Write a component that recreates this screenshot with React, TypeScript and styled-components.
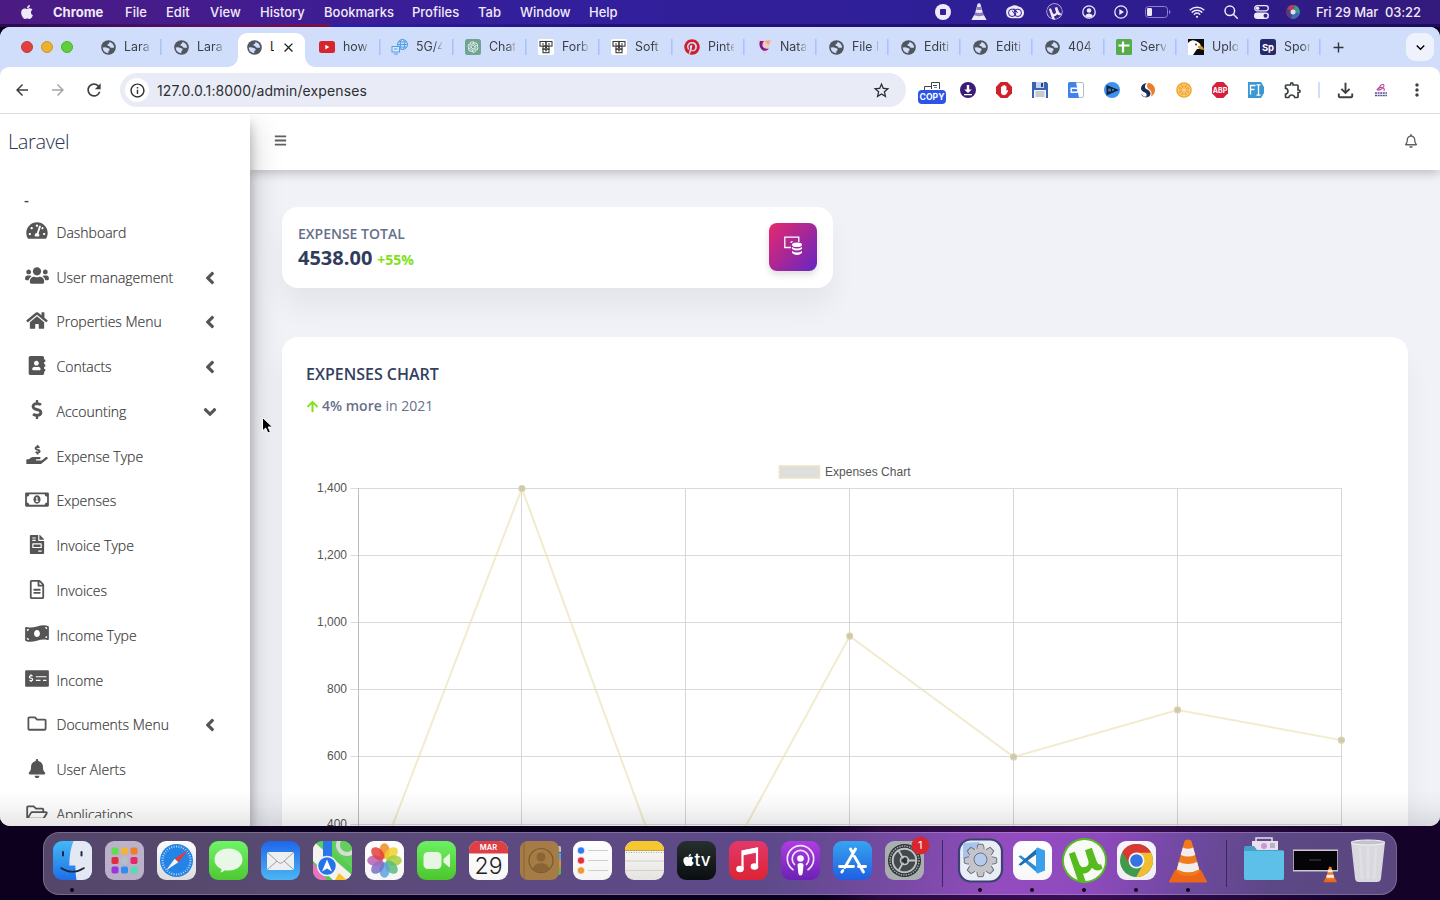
import React from "react";
import styled, { createGlobalStyle, css } from "styled-components";
import {
  FaAddressBook, FaAngleDown, FaAngleLeft, FaApple, FaArrowUp, FaBars, FaBell, FaDollarSign,
  FaFileInvoice, FaHandHoldingUsd, FaHome, FaMoneyBillWave, FaMoneyCheckAlt, FaPinterest,
  FaRegBell, FaRegFileAlt, FaRegFolder, FaRegFolderOpen, FaRegMoneyBillAlt, FaTachometerAlt, FaUsers,
} from "react-icons/fa";
import {
  MdAdd, MdArrowBack, MdArrowForward, MdClose, MdExpandMore, MdInfoOutline, MdMoreVert,
  MdOutlineExtension, MdOutlineFileDownload, MdRefresh, MdStarOutline,
} from "react-icons/md";
import { IoWifi } from "react-icons/io5";
import { RiOpenaiFill } from "react-icons/ri";

const GlobalStyle = createGlobalStyle`
  * { box-sizing: border-box; }
  body { margin: 0; overflow: hidden; background: #0b0020; }
`;

const ui = css`font-family: Inter, "Liberation Sans", sans-serif;`;

/* ---------- desktop and menu bar ---------- */

const Desktop = styled.div`
  width: 1440px;
  height: 900px;
  display: flex;
  flex-direction: column;
  overflow: hidden;
  background: linear-gradient(90deg, #0d001f 0, #08001a 820px, #2b0a40 880px, #3a0f55 1080px, #140228 1380px);
  ${ui}
`;

const MenuBar = styled.header`
  height: 27px;
  flex: none;
  padding: 0 19px 4px;
  display: flex;
  align-items: center;
  color: #f0eaf8;
  font-size: 13px;
  white-space: nowrap;
  background:
    linear-gradient(90deg, #2a0b50 0, #5a1068 220px, #7a104a 328px, #2a20b0 332px, #24127a 600px, #1c0d5c 100%) 0 24px / 100% 3px no-repeat,
    linear-gradient(90deg, #4b1b82 0, #421c90 250px, #331f9c 520px, #2f1f98 900px, #2d1c8c 1200px, #331a7c 1440px);
`;

const MenuItem = styled.span<{ $w: number; $bold?: boolean }>`
  width: ${(p) => p.$w}px;
  flex: none;
  line-height: 24px;
  font-weight: ${(p) => (p.$bold ? 700 : 500)};
  svg { display: block; }
`;

const StatusArea = styled.div`
  margin-left: auto;
  display: flex;
  align-items: center;
`;

const StatusSlot = styled.span<{ $w: number }>`
  width: ${(p) => p.$w}px;
  display: flex;
  justify-content: center;
`;

const Clock = styled.span`
  width: 107px;
  margin-left: 9px;
  margin-right: -2px;
  font-weight: 500;
  letter-spacing: -0.1px;
  white-space: pre;
`;

/* ---------- browser window ---------- */

const Window = styled.div`
  height: 799px;
  flex: none;
  display: flex;
  flex-direction: column;
  border-radius: 10px 10px 10px 10px;
  overflow: hidden;
  background: #fff;
  position: relative;
`;

const TabStrip = styled.div`
  height: 40px;
  flex: none;
  display: flex;
  background: #d0defb;
`;

const Lights = styled.div`
  width: 89px;
  flex: none;
  display: flex;
  gap: 8px;
  padding-left: 21px;
  align-items: center;
`;

const Light = styled.span<{ $c: string; $b: string }>`
  width: 12px;
  height: 12px;
  border-radius: 50%;
  background: ${(p) => p.$c};
  border: 1px solid ${(p) => p.$b};
`;

const Tab = styled.div<{ $w: number; $line?: boolean }>`
  width: ${(p) => p.$w}px;
  flex: none;
  height: 40px;
  display: flex;
  align-items: center;
  padding-left: 11px;
  font-size: 13px;
  color: #3b3f45;
  background: ${(p) => (p.$line ? "linear-gradient(#a8c4fa, #a8c4fa) right 0 center / 1.6px 16px no-repeat" : "none")};
`;

const ActiveTab = styled.div`
  width: 67px;
  margin: 6px 3px 0;
  height: 34px;
  flex: none;
  display: flex;
  align-items: center;
  padding: 0 9px 6px 8px;
  background: #fff;
  border-radius: 9px 9px 0 0;
  font-size: 13px;
  color: #1f1f1f;
  position: relative;
  &::before, &::after {
    content: "";
    position: absolute;
    bottom: 0;
    width: 10px;
    height: 10px;
  }
  &::before { left: -10px; background: radial-gradient(circle at 0 0, transparent 9.5px, #fff 10px); }
  &::after { right: -10px; background: radial-gradient(circle at 100% 0, transparent 9.5px, #fff 10px); }
`;

const Favicon = styled.span`
  width: 16px;
  height: 16px;
  flex: none;
  display: flex;
  align-items: center;
  justify-content: center;
  color: #50565d;
  svg { display: block; flex: none; }
`;

const TabTitle = styled.span<{ $w?: number }>`
  width: ${(p) => p.$w ?? 26}px;
  margin-left: 8px;
  overflow: hidden;
  white-space: nowrap;
  line-height: 18px;
  font-size: 12.4px;
  ${(p) => !p.$w && css`mask-image: linear-gradient(90deg, #000 68%, rgba(0, 0, 0, 0.2) 100%);`}
`;

const NewTab = styled.div`
  width: 34px;
  display: flex;
  align-items: center;
  justify-content: center;
  color: #30343a;
`;

const TabMenu = styled.div`
  width: 28px;
  height: 28px;
  margin: 6px 6px 0 auto;
  border-radius: 9px;
  background: #edf2fd;
  display: flex;
  align-items: center;
  justify-content: center;
`;

const TabShoulder = styled.div`
  background: #d0defb;
  flex: none;
`;

const Toolbar = styled.div`
  height: 47px;
  flex: none;
  display: flex;
  align-items: center;
  padding-left: 4px;
  border-bottom: 1px solid #dcdfe4;
  border-radius: 9px 9px 0 0;
  background: #fff;
`;

const Slot = styled.span<{ $w?: number; $dim?: boolean }>`
  width: ${(p) => p.$w ?? 36}px;
  flex: none;
  display: flex;
  align-items: center;
  justify-content: center;
  color: ${(p) => (p.$dim ? "#a3a5a8" : "#3c4043")};
  svg { display: block; }
`;

const AddressBar = styled.div`
  width: 786px;
  height: 34px;
  margin: 0 8px;
  flex: none;
  display: flex;
  align-items: center;
  padding: 0 15px 0 5px;
  border-radius: 17px;
  background: #e9ebf6;
  color: #2d2f33;
  font-size: 14px;
`;

const SiteInfo = styled.span`
  width: 24px;
  height: 24px;
  border-radius: 50%;
  background: #fff;
  display: flex;
  align-items: center;
  justify-content: center;
  margin-right: 8px;
`;

const Url = styled.span`
  flex: 1;
  letter-spacing: 0.13px;
`;

const Divider = styled.span`
  width: 2px;
  height: 16px;
  margin: 0 7px 0 6px;
  background: #cfdffb;
`;

const CopyExt = styled.span`
  display: flex;
  flex-direction: column;
  align-items: center;
  margin-top: 6px;
`;

const CopyBadge = styled.span`
  width: 28px;
  height: 14px;
  border-radius: 4px;
  background: #2c54e8;
  color: #fff;
  font-size: 8.6px;
  font-weight: 700;
  line-height: 14px;
  text-align: center;
`;

/* ---------- page ---------- */

const Page = styled.div`
  flex: 1;
  min-height: 0;
  display: flex;
  overflow: hidden;
  background: #f1f2f8;
  font-family: "Open Sans", "Liberation Sans", sans-serif;
  &::after {
    content: "";
    position: absolute;
    left: 0;
    right: 0;
    bottom: 0;
    height: 36px;
    background: linear-gradient(rgba(0, 0, 0, 0), rgba(0, 0, 0, 0.03) 45%, rgba(0, 0, 0, 0.1));
    pointer-events: none;
    z-index: 4;
  }
`;

const Sidebar = styled.aside`
  width: 250px;
  flex: none;
  height: 712px;
  background: #fff;
  box-shadow: 0 14px 28px rgba(0, 0, 0, 0.25), 0 10px 10px rgba(0, 0, 0, 0.22);
  z-index: 2;
  overflow: hidden;
`;

const Brand = styled.div`
  height: 56px;
  padding-left: 8px;
  line-height: 56px;
  font-size: 20px;
  font-weight: 300;
  letter-spacing: -0.4px;
  color: #2a3352;
`;

const UserName = styled.div`
  height: 40px;
  padding: 17px 0 0 24px;
  font-size: 15px;
  line-height: 24px;
  font-weight: 600;
  color: #344767;
`;

const NavList = styled.nav`
  height: 608px;
  overflow: hidden;
`;

const NavItem = styled.div`
  height: 44.77px;
  display: flex;
  align-items: center;
  padding: 0 34px 0 24px;
  color: #555;
`;

const NavIcon = styled.span`
  width: 26px;
  margin-right: 6.5px;
  margin-top: -3px;
  display: flex;
  justify-content: center;
  svg { display: block; flex: none; height: 19px; width: 26px; }
`;

const NavLabel = styled.span`
  flex: 1;
  font-size: 14px;
  font-weight: 300;
  white-space: nowrap;
  color: #333;
  -webkit-text-stroke: 0.2px #444;
`;

const Caret = styled.span`
  width: 12px;
  display: flex;
  justify-content: center;
  padding-top: 1px;
  svg { flex: none; }
`;

const Main = styled.main`
  flex: 1;
  min-width: 0;
  display: flex;
  flex-direction: column;
`;

const TopNav = styled.div`
  height: 56px;
  flex: none;
  display: flex;
  align-items: center;
  justify-content: space-between;
  padding: 0 22px 3px 24px;
  background: #fff;
  color: #606060;
  box-shadow: 0 3px 10px rgba(0, 0, 0, 0.22);
  z-index: 1;
`;

const Content = styled.div`
  flex: 1;
  padding: 37px 32px 0;
  display: flex;
  flex-direction: column;
  gap: 49px;
`;

const Card = styled.section`
  background: #fff;
  border-radius: 16px;
  box-shadow: 0 20px 27px rgba(0, 0, 0, 0.05);
`;

const StatCard = styled(Card)`
  width: 551px;
  height: 81px;
  flex: none;
  padding: 16px;
  display: flex;
  justify-content: space-between;
`;

const StatLabel = styled.div`
  font-size: 14px;
  line-height: 21px;
  font-weight: 600;
  color: #67708a;
`;

const StatValue = styled.div`
  font-size: 20px;
  line-height: 27px;
  font-weight: 700;
  color: #303c5c;
`;

const StatDelta = styled.span`
  margin-left: 5px;
  font-size: 14px;
  color: #82e01e;
`;

const StatIcon = styled.div`
  width: 48px;
  height: 48px;
  border-radius: 8px;
  padding-top: 13px;
  display: flex;
  justify-content: center;
  background: linear-gradient(310deg, #6426c4, #e8286c);
  box-shadow: 0 4px 7px rgba(0, 0, 0, 0.13);
`;

const ChartCard = styled(Card)`
  height: 600px;
  flex: none;
  padding: 24px 24px 0;
`;

const ChartTitle = styled.div`
  font-size: 16px;
  line-height: 26px;
  font-weight: 600;
  color: #344060;
`;

const ChartNote = styled.div`
  margin-top: 7px;
  display: flex;
  align-items: center;
  font-size: 14px;
  line-height: 24px;
  white-space: pre;
  color: #67708a;
  b { font-weight: 600; }
  svg { margin-right: 3px; color: #82e01e; }
`;

const Plot = styled.svg`
  display: block;
  margin-top: 42px;
  overflow: visible;
`;

/* ---------- dock ---------- */

const Dock = styled.footer`
  width: 1354px;
  height: 63px;
  margin: 6px 0 0 43px;
  padding: 0 2px;
  flex: none;
  display: flex;
  align-items: center;
  border-radius: 16px;
  border: 1px solid rgba(255, 255, 255, 0.2);
  background: linear-gradient(100deg, #54456a 0, #584a70 230px, #5d4a82 480px, #5e4a8a 720px, #7a4aa6 860px, #934cc0 950px, #8e4abc 1040px, #6f49a0 1130px, #5c4884 1220px, #5a4780 100%);
`;

const DockSlot = styled.div<{ $running?: boolean }>`
  width: ${52.05}px;
  height: 61px;
  flex: none;
  padding-top: 8px;
  display: flex;
  flex-direction: column;
  align-items: center;
  gap: 8px;
  &::after {
    content: "";
    width: 4px;
    height: 4px;
    border-radius: 50%;
    background: ${(p) => (p.$running ? "#0b0614" : "transparent")};
  }
  svg { display: block; overflow: visible; flex: none; }
`;

const Oversize = styled.span<{ $up: number; $down: number }>`
  margin: -${(p) => p.$up}px 0 -${(p) => p.$down}px;
`;

const DockLine = styled.div`
  width: 24px;
  height: 47px;
  background: linear-gradient(#3c2860, #3c2860) center / 1px 100% no-repeat;
`;

const Pointer = styled.svg`
  position: absolute;
  left: 261px;
  top: 389px;
  z-index: 5;
`;

/* ---------- small drawings ---------- */

const Blocks = () => (
  <svg width="16" height="16" viewBox="0 0 16 16">
    <rect width="16" height="16" rx="2" fill="#fff" />
    <g fill="none" stroke="#3a3a3a" strokeWidth="1.1">
      <rect x="2" y="2.5" width="6" height="4.6" /><rect x="8" y="2.5" width="6" height="4.6" />
      <rect x="5" y="7.1" width="6" height="3" /><rect x="5" y="10.1" width="6" height="3.6" />
      <path d="M4 5h2M10 5h2M7 8.6h2M7 11.8h2" />
    </g>
  </svg>
);

const Cone = ({ size, mono }: { size: number; mono?: boolean }) => {
  const a = mono ? "#eee8f8" : "#f07a1c";
  const b = mono ? "#8d7cc0" : "#f2eeee";
  return (
    <svg width={size} height={size * 1.1} viewBox="0 0 40 44">
      <path d="M7 31h26l6 11.500q.4 1-1 1H2q-1.400 0-1-1z" fill={mono ? a : "#ec661a"} />
      <path d="M16.500 2q.5-1.500 3.500-1.500t3.500 1.500L32 33q-4 4-12 4T8 33z" fill={a} />
      <path d="M14.800 8.500q5 2.500 10.400 0l2.100 7.500q-7 3-14.600 0zM10.800 23q9.200 4 18.400 0l2 7.400q-10.600 5.500-22.400 0z" fill={b} />
    </svg>
  );
};

const MuMark = ({ size, mono }: { size: number; mono?: boolean }) => (
  <svg width={size} height={size} viewBox="0 0 48 48">
    <circle cx="24" cy="24" r="23" fill={mono ? "#cfc4ea" : "#56bb1f"} />
    <circle cx="24" cy="24" r="21" fill={mono ? "#3b2391" : "#f8fbf5"} />
    <path d="M8 17l6-2 5 13q2 4 6 2.500 4-1.500 3-6l-3.500-11 7-2.500 5 14q1.500 4 4.500 3l1.500 4.500q-6 4-11-1-3 6-9 6l3 9q-5 .5-8-1z" fill={mono ? "#f0eaf8" : "#56bb1f"} />
  </svg>
);

const globe = (
  <svg width="15" height="15" viewBox="0 0 16 16">
    <circle cx="8" cy="8" r="7.800" fill="#50565d" />
    <path d="M9 2.200q4.600 1 5 6h-3.200q-1.800 0-2-1.700-2.300 0-2-1.800Q9 4.500 9 2.200z" fill="#d0defb" />
    <path d="M1.800 8q3.200-.9 5 .4 2.600.2 2.500 2.200-1.900.6-1.600 3.500Q2.300 13.400 1.800 8z" fill="#d0defb" />
  </svg>
);

const tabs: { title: string; icon: React.ReactNode }[] = [
  { title: "Lara", icon: globe },
  { title: "Lara", icon: globe },
  { title: "L", icon: globe },
  { title: "how", icon: <svg width="16" height="12" viewBox="0 0 16 12"><rect width="16" height="12" rx="2.500" fill="#d8242c" /><path d="M6.300 3.800v4.600l4-2.300z" fill="#fff" /></svg> },
  { title: "5G/4", icon: (
    <svg width="18" height="16" viewBox="0 0 18 16" fill="none" stroke="#4f9fe6" strokeWidth="1">
      <circle cx="11.500" cy="5.500" r="5" /><ellipse cx="11.500" cy="5.500" rx="2.200" ry="5" /><path d="M6.500 5.500h10M7.300 3h8.400M7.300 8h8.400" />
      <rect x="1" y="7.500" width="7.500" height="5.500" fill="#dbe8fc" /><path d="M3 15h4M3 10h3.500" />
    </svg>) },
  { title: "Chat", icon: <svg width="16" height="16" viewBox="0 0 16 16"><rect width="16" height="16" rx="2.500" fill="#6fa493" /><g color="#fff"><RiOpenaiFill x="1.500" y="1.500" size={13} /></g></svg> },
  { title: "Forb", icon: <Blocks /> },
  { title: "Soft", icon: <Blocks /> },
  { title: "Pinte", icon: <FaPinterest size={16} color="#d0202e" /> },
  { title: "Nata", icon: (
    <svg width="15" height="16" viewBox="0 0 15 16">
      <path d="M0 1h15L8 15.500z" fill="#f0c8c8" /><path d="M3 2q-2 6 3 9.500 4 1 6-2-5 1-6.500-2.500Q5 4 7 2z" fill="#7a1e8c" /><path d="M8 2l5-.5-1.500 4.500z" fill="#eda47c" />
    </svg>) },
  { title: "File I", icon: globe },
  { title: "Editi", icon: globe },
  { title: "Editi", icon: globe },
  { title: "404", icon: globe },
  { title: "Serv", icon: <svg width="16" height="16" viewBox="0 0 16 16"><rect width="16" height="16" rx="1.500" fill="#55ad49" /><path d="M7 2.500v11M2.500 6.500h11" stroke="#fff" strokeWidth="2.200" /></svg> },
  { title: "Uplo", icon: (
    <svg width="16" height="16" viewBox="0 0 16 16">
      <rect width="16" height="16" fill="#0c0c0c" /><path d="M0 4q3-4 8-2 5 2 5 6 0 2-4 2-2 3-4 6H0z" fill="#fff" /><circle cx="8" cy="5.500" r=".9" fill="#222" /><path d="M10 7q5-1 6 4-3 0-6-2z" fill="#e0902c" />
    </svg>) },
  { title: "Spor", icon: (
    <svg width="16" height="16" viewBox="0 0 16 16">
      <rect width="16" height="16" rx="2.500" fill="#28286c" /><text x="8" y="11.500" textAnchor="middle" fontFamily="Inter, sans-serif" fontSize="9.500" fontWeight="700" fill="#fff">Sp</text>
    </svg>) },
];

const extensions: React.ReactNode[] = [
  <svg width="16" height="16" viewBox="0 0 16 16"><circle cx="8" cy="8" r="8" fill="#3c1a78" /><path d="M6.800 3h2.400v4.500h2.600L8 11 4.200 7.500h2.600zM4 12h8v1.200H4z" fill="#fff" /></svg>,
  <svg width="16" height="16" viewBox="0 0 16 16"><path d="M4.700 0h6.600L16 4.700v6.600L11.300 16H4.700L0 11.300V4.700z" fill="#d11f2c" /><path d="M5 8V5q.6-.8 1.200 0V4q.7-1 1.400 0v-.7q.7-.8 1.400 0V4.200q.7-.8 1.400 0V9l1-1q1 0 .7 1L10.400 12q-1 1.300-3 1.100T5 11z" fill="#fff" /></svg>,
  <svg width="16" height="16" viewBox="0 0 16 16"><path d="M0 0h14.500L16 1.500V16H0z" fill="#3a63b8" /><path d="M4 0h8v6H4z" fill="#c5d4ec" /><path d="M9 1h2v4H9z" fill="#27427e" /><path d="M2 8h12v8H2z" fill="#f6f6f6" /><path d="M3.500 10h9M3.500 12h9M3.500 14h9" stroke="#8d95a5" strokeWidth=".9" /></svg>,
  <svg width="16" height="16" viewBox="0 0 16 16"><rect x="5" y=".5" width="10.500" height="15" rx="1.500" fill="#fff" stroke="#b5bcc8" /><path d="M1.500 0H8l3 16H1.500Q0 16 0 14.500v-13Q0 0 1.500 0z" fill="#4183ee" /><path d="M2.500 5.500H8q3.500.5 3.500 2.800T8 11H2.500z" fill="#fff" /><path d="M4 7h4q1.500.4 1.500 1.300T8 9.500H4z" fill="#4183ee" /></svg>,
  <svg width="16" height="16" viewBox="0 0 16 16"><circle cx="8" cy="8" r="8" fill="#3d93ec" /><path d="M2.500 3L15 8 2.500 13.500z" fill="#14233c" /><path d="M4 6.500h3v3H4zM8 7h2v2H8z" fill="#3d6fa8" /></svg>,
  <svg width="16" height="16" viewBox="0 0 16 16"><path d="M6.500 1Q1 2 1 6.500q0 2.500 4 4 2.500 1.200 1.200 4.200Q2 14.500 1 11q0 3.500 5 4.500 4.500-.5 4.500-4.300Q10 8.500 6 7 3.500 4.500 6.500 1z" fill="#1d2c56" /><path d="M8 .8q6.500 1.200 7 6.700 0 5-4 7 1.800-5-2-7.200Q5.500 5 8 .8z" fill="#ea7c2c" /></svg>,
  <svg width="16" height="16" viewBox="0 0 16 16"><circle cx="8" cy="8" r="7.800" fill="#f0a52c" /><circle cx="8" cy="8" r="6" fill="#f3a936" stroke="#fbdc9c" strokeWidth=".7" /><path d="M8 2v12M2 8h12M3.800 3.800l8.400 8.400M12.200 3.800l-8.400 8.400" stroke="#fde2ac" strokeWidth=".7" /></svg>,
  <svg width="16" height="16" viewBox="0 0 16 16"><path d="M4.700 0h6.600L16 4.700v6.600L11.300 16H4.700L0 11.300V4.700z" fill="#d3213e" /><text x="8" y="10.700" textAnchor="middle" fontFamily="Inter, sans-serif" fontSize="7" fontWeight="700" fill="#fff">ABP</text></svg>,
  <svg width="16" height="16" viewBox="0 0 16 16"><path d="M0 0h13l3 5v6l-3 5H0z" fill="#3d97d3" /><path d="M2.500 12.500V3.500h5M2.500 7.500h4M8.500 2.800h4M8.500 13.200h4M10.500 3v10" fill="none" stroke="#fff" strokeWidth="1.300" /></svg>,
];

const nav: { label: string; icon: React.ReactNode; caret?: "left" | "down" }[] = [
  { label: "Dashboard", icon: <FaTachometerAlt /> },
  { label: "User management", icon: <FaUsers />, caret: "left" },
  { label: "Properties Menu", icon: <FaHome />, caret: "left" },
  { label: "Contacts", icon: <FaAddressBook />, caret: "left" },
  { label: "Accounting", icon: <FaDollarSign />, caret: "down" },
  { label: "Expense Type", icon: <FaHandHoldingUsd /> },
  { label: "Expenses", icon: <FaRegMoneyBillAlt /> },
  { label: "Invoice Type", icon: <FaFileInvoice /> },
  { label: "Invoices", icon: <FaRegFileAlt /> },
  { label: "Income Type", icon: <FaMoneyBillWave /> },
  { label: "Income", icon: <FaMoneyCheckAlt /> },
  { label: "Documents Menu", icon: <FaRegFolder />, caret: "left" },
  { label: "User Alerts", icon: <FaBell /> },
  { label: "Applications", icon: <FaRegFolderOpen /> },
];

const menus: [string, number][] = [
  ["Chrome", 72], ["File", 41], ["Edit", 44], ["View", 50], ["History", 64], ["Bookmarks", 88],
  ["Profiles", 66], ["Tab", 42], ["Window", 69], ["Help", 40],
];

/* ---------- chart ---------- */

const expenses = [128, 1400, 68, 960, 600, 740, 650];
const px = (i: number) => 52 + i * 163.9;
const py = (v: number) => 28.5 + ((1400 - v) / 200) * 67.1;

const ExpensesPlot = () => (
  <Plot width="1078" height="480" viewBox="0 0 1078 480" fontFamily='"Liberation Sans", Arial, sans-serif' fontSize="12" fill="#555">
    <rect x="473.500" y="6" width="40" height="12" fill="#dedede" stroke="#eae4c4" strokeWidth="1.600" />
    <text x="519" y="16" textLength="85.500">Expenses Chart</text>
    {[1400, 1200, 1000, 800, 600, 400, 200].map((v) => {
      const y = Math.floor(py(v)) + 0.5;
      return (
        <g key={v}>
          <path d={`M44.500 ${y}H1036`} stroke="#dadada" />
          <text x="41" y={y + 3.800} textAnchor="end">{v.toLocaleString("en-US")}</text>
        </g>
      );
    })}
    {expenses.map((_, i) => (
      <path key={i} d={`M${Math.floor(px(i)) + 0.5} 28V480`} stroke={i === 0 ? "#bdbdbd" : "#d6d6d6"} />
    ))}
    <polyline points={expenses.map((v, i) => `${px(i)},${py(v)}`).join(" ")} fill="none" stroke="#ebe0b4" strokeOpacity=".65" strokeWidth="2" />
    {expenses.map((v, i) => (
      <circle key={i} cx={px(i)} cy={py(v)} r="3" fill="#cdc8b2" stroke="#dcd3a8" strokeWidth="1.200" />
    ))}
  </Plot>
);

/* ---------- dock icons ---------- */

const Tile = ({ id, from, to, children }: { id: string; from: string; to: string; children?: React.ReactNode }) => (
  <svg width="39" height="39" viewBox="0 0 39 39">
    <defs>
      <linearGradient id={id} x1="0" y1="0" x2="0" y2="1"><stop stopColor={from} /><stop offset="1" stopColor={to} /></linearGradient>
      <clipPath id={`${id}-clip`}><rect width="39" height="39" rx="9" /></clipPath>
    </defs>
    <rect width="39" height="39" rx="9" fill={`url(#${id})`} />
    <g clipPath={`url(#${id}-clip)`}>{children}</g>
  </svg>
);

const ticks = Array.from({ length: 36 }, (_, i) => i * 10);
const petals = ["#f08c1e", "#f3d02c", "#a6cf3c", "#5cbb7c", "#5aa4de", "#7a70c8", "#b460b4", "#e4403c"];
const padColors = ["#5ee04c", "#f2b43a", "#ee7f28", "#e02c3c", "#b8bcc4", "#e8266c", "#9b36dc", "#2f8cf0", "#58dcae"];

const mainApps: React.ReactNode[] = [
  <Tile id="finder" from="#43b9f8" to="#1f6fe6">
    <path d="M20.500 0H39v39H23.500q-1.300-7-1.200-14.500h-6Q16.300 10 20.500 0z" fill="#e3e8f2" />
    <path d="M10 11v3.500M28.500 11v3.500" stroke="#1b2a44" strokeWidth="2" strokeLinecap="round" />
    <path d="M8 27q11.500 7.500 23 0" fill="none" stroke="#1b2a44" strokeWidth="1.600" strokeLinecap="round" />
  </Tile>,
  <Tile id="launchpad" from="#bdb2cc" to="#b9b0c8">
    {padColors.map((c, i) => <rect key={i} x={6.500 + (i % 3) * 9.500} y={6.500 + Math.floor(i / 3) * 9.500} width="7" height="7" rx="1.800" fill={c} />)}
  </Tile>,
  <Tile id="safari" from="#fdfdfd" to="#dcdcdc">
    <circle cx="19.500" cy="19.500" r="16.500" fill="#2484e6" />
    {ticks.map((t) => <path key={t} d="M19.500 4.500v2" stroke="#d8eafb" strokeWidth=".8" transform={`rotate(${t} 19.500 19.500)`} />)}
    <path d="M31 9L21.300 21.300l-3.600-3.600z" fill="#e8383c" /><path d="M9 29.500l12.300-8.200-3.600-3.600z" fill="#f5f5f5" />
  </Tile>,
  <Tile id="messages" from="#6ff467" to="#4fc832">
    <path d="M19.500 7.500c8 0 14 4.500 14 11s-6 11-14 11q-2 0-3.500-.3-2 2-5 2.300 1.500-1.500 1.500-3.500c-4.500-2-7-5.500-7-9.500 0-6.500 6-11 14-11z" fill="#e9f8e6" />
  </Tile>,
  <Tile id="mail" from="#1f66ea" to="#4db6f2">
    <rect x="6" y="11" width="27" height="18" rx="2" fill="#eeeff0" />
    <path d="M7 12l10.500 9.500q2 1.500 4 0L32 12M7 28l9-8M32 28l-9-8" fill="none" stroke="#999da4" strokeWidth="1" />
  </Tile>,
  <Tile id="maps" from="#5fcf5c" to="#52c84e">
    <path d="M0 0l39 34v5H20L0 20z" fill="#f4f2ec" /><path d="M0 22l14 17H0z" fill="#e872c0" /><path d="M22 39l4-7 8 7z" fill="#f7c42c" />
    <path d="M22 0h17v27L20 9z" fill="#64cf5c" />
    <path d="M10 0h9v20h-9z" fill="#2a78e8" /><circle cx="34" cy="4" r="9" fill="none" stroke="#d8dcd8" strokeWidth="4" />
    <circle cx="14" cy="25" r="9.500" fill="#2473ea" stroke="#f2f4f8" strokeWidth="1.500" /><path d="M14 18.500l5 12-5-3-5 3z" fill="#fff" />
  </Tile>,
  <Tile id="photos" from="#ffffff" to="#f5f5f5">
    {petals.map((c, i) => <ellipse key={c} cx="19.500" cy="10" rx="5.200" ry="7.800" fill={c} opacity=".85" transform={`rotate(${i * 45} 19.500 19.500)`} />)}
  </Tile>,
  <Tile id="facetime" from="#6cf062" to="#4cc62e">
    <rect x="6.500" y="11" width="18" height="17" rx="4.500" fill="#e6f6e2" /><path d="M26.500 18l5.500-5q1-.5 1 .8v11.400q0 1.300-1 .8l-5.500-4.500z" fill="#e6f6e2" />
  </Tile>,
  <Tile id="calendar" from="#ffffff" to="#f6f6f6">
    <path d="M0 0h39v12.500H0z" fill="#dd3f45" />
    <text x="19.500" y="9.300" textAnchor="middle" fontFamily="Inter, sans-serif" fontSize="7.500" fontWeight="600" fill="#fff">MAR</text>
    <text x="19.500" y="33" textAnchor="middle" fontFamily="Inter, sans-serif" fontSize="23" fontWeight="300" fill="#222">29</text>
  </Tile>,
  <svg width="41" height="39" viewBox="0 0 41 39">
    <path d="M36 5h4q1 0 1 2v4h-5z" fill="#b8c4cc" /><path d="M36 12h5v7h-5z" fill="#48a8dc" /><path d="M36 19h5v7h-5z" fill="#e08c3c" /><path d="M36 26h5v6q0 2-2 2h-3z" fill="#5cb84c" />
    <rect width="39" height="39" rx="8" fill="#a57c46" /><path d="M4 1v37" stroke="#8c6534" strokeWidth="1" />
    <circle cx="21" cy="19.500" r="12" fill="none" stroke="#7d5a2e" strokeWidth="1.200" /><circle cx="21" cy="16" r="4.500" fill="#8a6434" /><path d="M12.500 28q2-6 8.500-6t8.500 6q-8.500 6.500-17 0z" fill="#8a6434" />
  </svg>,
  <Tile id="reminders" from="#ffffff" to="#f4f4f4">
    {["#2f7cf0", "#e0343f", "#f0973a"].map((c, i) => (
      <g key={c}><circle cx="8" cy={9.500 + i * 10} r="3" fill={c} stroke={c} strokeOpacity=".35" strokeWidth="1.500" /><path d={`M15 ${9.500 + i * 10}h20`} stroke="#cfcfcf" strokeWidth="1" /></g>
    ))}
  </Tile>,
  <Tile id="notes" from="#fbfbfa" to="#e6e4e0">
    <path d="M0 0h39v9.500H0z" fill="#f5c831" /><path d="M0 9.500h39" stroke="#b8963a" strokeWidth=".8" /><path d="M1 11.500h38" stroke="#a8a8a4" strokeWidth="1" strokeDasharray="1 1.500" />
    <path d="M0 20h39M0 29.500h39" stroke="#cfcdc8" strokeWidth=".9" />
  </Tile>,
  <Tile id="tv" from="#26302f" to="#0a0e10">
    <g color="#fff"><FaApple x="4.500" y="12" size={14} /></g>
    <text x="17.500" y="24.500" fontFamily="Inter, sans-serif" fontSize="17" fontWeight="500" fill="#fff">tv</text>
  </Tile>,
  <Tile id="music" from="#e2386a" to="#dc2436">
    <path d="M13.500 27.500V10.500L28 7.500v17" fill="none" stroke="#fff" strokeWidth="2.200" /><path d="M13.500 9.500L28 6.500v5l-14.500 3z" fill="#fff" />
    <ellipse cx="11" cy="28" rx="3.800" ry="3.200" fill="#fff" /><ellipse cx="25.500" cy="25.500" rx="3.800" ry="3.200" fill="#fff" />
  </Tile>,
  <Tile id="podcasts" from="#b03ce4" to="#6a22b4">
    <path d="M12 28.700a13.200 13.200 0 1 1 15 0" fill="none" stroke="#f4e6fb" strokeWidth="1.700" strokeLinecap="round" /><path d="M13.500 23.500a8.300 8.300 0 1 1 12 0" fill="none" stroke="#f4e6fb" strokeWidth="1.700" strokeLinecap="round" />
    <circle cx="19.500" cy="17.500" r="3.300" fill="#fff" /><path d="M16.500 24q0-2 3-2t3 2l-.8 8q-.3 2.500-2.200 2.500T17.300 32z" fill="#fff" />
  </Tile>,
  <Tile id="appstore" from="#36a4f0" to="#1f5fe0">
    <path d="M22.500 8L11.800 26.500M17.500 8l2.200 3.800M21.500 15.500L30.500 31M6.500 25.500h14M25.500 25.500h7M9.800 29.500L8.800 31" stroke="#fff" strokeWidth="2.900" strokeLinecap="round" />
  </Tile>,
  <svg width="39" height="39" viewBox="0 0 39 39">
    <rect width="39" height="39" rx="9" fill="#a9aeae" />
    <circle cx="19.500" cy="19.500" r="16.500" fill="#2d3133" /><circle cx="19.500" cy="19.500" r="14.500" fill="none" stroke="#a3a8aa" strokeWidth="1.500" strokeDasharray="1.500 1" />
    <circle cx="19.500" cy="19.500" r="11.800" fill="#44494b" stroke="#bfc4c5" strokeWidth="2" /><circle cx="19.500" cy="19.500" r="4" fill="#3a3f41" stroke="#bfc4c5" strokeWidth="1.600" />
    <path d="M19.500 19.500H31M19.500 19.500L13.500 9.500M19.500 19.500L13.500 29.500" stroke="#bfc4c5" strokeWidth="1.800" /><circle cx="19.500" cy="19.500" r="2.500" fill="#2d3133" />
    <circle cx="35.500" cy="4.500" r="9" fill="#d8262c" /><text x="35.300" y="8.300" textAnchor="middle" fontFamily="Inter, sans-serif" fontSize="11" fill="#fff">1</text>
  </svg>,
];

const gearTeeth = Array.from({ length: 8 }, (_, i) => i * 45);

const runningApps: React.ReactNode[] = [
  <svg width="39" height="39" viewBox="0 0 39 39">
    <rect x="-2" y="-1.500" width="43" height="42" rx="12" fill="#e9edf6" stroke="#3b4270" strokeWidth="2.200" /><path d="M2 2l17-1-12 18-5-1z" fill="#a8c4ec" />
    <g fill="#c4c4ca" stroke="#70707c" strokeWidth="1">
      {gearTeeth.map((t) => <path key={t} d="M16 6.500l1-3.200h5l1 3.200v4h-7z" transform={`rotate(${t} 19.500 19.500)`} />)}
      <circle cx="19.500" cy="19.500" r="12" stroke="none" /><circle cx="19.500" cy="18.500" r="6.500" fill="#b4cbec" />
    </g>
  </svg>,
  <Tile id="vscode" from="#ffffff" to="#f7f7f7">
    <path d="M5.500 15.500l2.200-1.300L25 27v5.500z" fill="#2f8bd4" /><path d="M5.500 23.500l2.200 1.300L25 12V6.500z" fill="#1d6cb0" /><path d="M24.500 6.500l7.500 3v20l-7.500 3-1.500-1.500V8z" fill="#3ba0ea" />
  </Tile>,
  <Oversize $up={4} $down={4}><MuMark size={47} /></Oversize>,
  <Tile id="chrome" from="#f7f5fb" to="#f0edf6">
    <circle cx="19.500" cy="19.500" r="16.500" fill="#3f9a4c" />
    <path d="M19.500 19.500L5.200 11.200A16.500 16.500 0 0 1 33.800 11.200z" fill="#d93a30" /><path d="M19.500 11.800h14.600A16.500 16.500 0 0 1 19.300 36l6.900-12.700z" fill="#f4bd30" />
    <path d="M5.200 11.200L12.800 23.300l6.700-11.500z" fill="#d93a30" /><circle cx="19.500" cy="19.500" r="8" fill="#f6f6f6" /><circle cx="19.500" cy="19.500" r="6.300" fill="#3474e0" />
  </Tile>,
  <Oversize $up={2} $down={3}><Cone size={40} /></Oversize>,
];

const trayApps: React.ReactNode[] = [
  <svg width="40" height="39" viewBox="0 0 40 39">
    <path d="M8 0h26v12H8z" fill="#e8e0ee" /><path d="M12-3h16v6H12z" fill="none" stroke="#e8e0ee" strokeWidth="1.500" /><circle cx="20" cy="5" r="3" fill="#c89ad0" /><path d="M26 2h5v5h-5z" fill="#b8b4c8" />
    <path d="M0 7q0-2 2-2h8l3 4h25q2 0 2 2v26q0 2-2 2H2q-2 0-2-2z" fill="#4a9fc8" /><path d="M0 10h40v27q0 2-2 2H2q-2 0-2-2z" fill="#5cc0e8" />
  </svg>,
  <svg width="45" height="39" viewBox="0 0 45 39">
    <path d="M0 8.500h45v22H0z" fill="#cfc8d4" /><path d="M.8 10h43.400v19H.8z" fill="#050507" /><path d="M16 19h12" stroke="#555" strokeWidth=".8" />
    <g transform="translate(30 25.500) scale(.36)"><path d="M7 31h26l6 12.500H1z" fill="#ec661a" /><path d="M17 1h6l9 32q-12 7-24 0z" fill="#f07a1c" /><path d="M14.800 8.500h10.400l2.100 7.500H12.700zM10.800 23h18.400l2 8H8.800z" fill="#f2eeee" /></g>
  </svg>,
  <svg width="36" height="39" viewBox="0 0 36 39">
    <path d="M1 1l4 36q.3 4 4 4h18q3.700 0 4-4l4-36z" fill="#d9d8de" /><ellipse cx="18" cy="1.500" rx="17" ry="2.500" fill="#c4c2cc" stroke="#f3f2f6" strokeWidth="1" />
    <path d="M10 6l2 32M18 6v32M26 6l-2 32" stroke="#e0dfe5" strokeWidth="2.500" />
  </svg>,
];

/* ---------- app ---------- */

export default function App() {
  return (
    <Desktop>
      <GlobalStyle />
      <MenuBar>
        <MenuItem $w={34}><FaApple size={16} /></MenuItem>
        {menus.map(([label, w], i) => <MenuItem key={label} $w={w} $bold={i === 0}>{label}</MenuItem>)}
        <StatusArea>
          <StatusSlot $w={36}><svg width="16" height="16" viewBox="0 0 16 16"><circle cx="8" cy="8" r="8" fill="#f0eaf8" /><rect x="5" y="5" width="6" height="6" rx="1" fill="#33209a" /></svg></StatusSlot>
          <StatusSlot $w={36}><Cone size={16} mono /></StatusSlot>
          <StatusSlot $w={36}>
            <svg width="20" height="14" viewBox="0 0 20 14">
              <path d="M6.500 13.200a6 6 0 0 1-.8-11.800Q10-.8 13.600 1.400q2.600.3 4 2.500a5.600 5.600 0 0 1-3.600 9.300z" fill="#f0eaf8" />
              <g fill="none" stroke="#33209a" strokeWidth="1"><circle cx="7.200" cy="7.800" r="3.700" /><circle cx="12.800" cy="7.800" r="3.700" /><path d="M7 5.800l4 3.800M9 3.500l3.500 4.200" /></g>
            </svg>
          </StatusSlot>
          <StatusSlot $w={42}><MuMark size={17} mono /></StatusSlot>
          <StatusSlot $w={28}><svg width="14" height="14" viewBox="0 0 14 14"><circle cx="7" cy="7" r="6.200" fill="none" stroke="#f0eaf8" strokeWidth="1.300" /><circle cx="7" cy="5.500" r="2.300" fill="#f0eaf8" /><path d="M3 11q1-2.500 4-2.500t4 2.500q-4 3-8 0z" fill="#f0eaf8" /></svg></StatusSlot>
          <StatusSlot $w={36}><svg width="14" height="14" viewBox="0 0 14 14"><circle cx="7" cy="7" r="6.200" fill="none" stroke="#f0eaf8" strokeWidth="1.300" /><path d="M5.300 4v6l4.700-3z" fill="#f0eaf8" /></svg></StatusSlot>
          <StatusSlot $w={38}><svg width="26" height="12" viewBox="0 0 26 12"><rect x=".5" y=".5" width="22" height="11" rx="3" fill="none" stroke="#8f80c8" /><rect x="2" y="2" width="5" height="8" rx="1.200" fill="#f0eaf8" /><path d="M24 4q1.500.5 1.500 2T24 8z" fill="#8f80c8" /></svg></StatusSlot>
          <StatusSlot $w={40}><IoWifi size={18} /></StatusSlot>
          <StatusSlot $w={27}><svg width="14" height="14" viewBox="0 0 14 14" fill="none" stroke="#f0eaf8" strokeWidth="1.500"><circle cx="5.800" cy="5.800" r="4.800" /><path d="M9.300 9.300l4 4" strokeLinecap="round" /></svg></StatusSlot>
          <StatusSlot $w={35}><svg width="15" height="14" viewBox="0 0 15 14"><rect x=".7" y=".7" width="13.600" height="5.200" rx="2.600" fill="none" stroke="#f0eaf8" strokeWidth="1.300" /><circle cx="3.600" cy="3.300" r="1.800" fill="#f0eaf8" /><rect y="7.500" width="15" height="6.500" rx="3.200" fill="#f0eaf8" /><circle cx="11.500" cy="10.700" r="2" fill="#33209a" /></svg></StatusSlot>
          <StatusSlot $w={28}>
            <svg width="14" height="14" viewBox="0 0 14 14"><circle cx="7" cy="7" r="7" fill="#5a3a80" /><path d="M7 7L1 3.500A7 7 0 0 1 9 .3z" fill="#b0405c" /><path d="M7 7L9 .3A7 7 0 0 1 13.500 9z" fill="#3a988c" /><path d="M7 7l6.500 2A7 7 0 0 1 5 13.700z" fill="#3f6cb0" /><circle cx="7" cy="7" r="2.500" fill="#e8f4f4" opacity=".9" /></svg>
          </StatusSlot>
          <Clock>{"Fri 29 Mar  03:22"}</Clock>
        </StatusArea>
      </MenuBar>

      <Window>
        <TabStrip>
          <Lights>
            <Light $c="#e0413f" $b="#c23a38" /><Light $c="#edb130" $b="#cf982a" /><Light $c="#5fcf3c" $b="#4cb22e" />
          </Lights>
          {tabs.map((t, i) =>
            i === 2 ? (
              <ActiveTab key={i}>
                <Favicon>{t.icon}</Favicon>
                <TabTitle $w={4}>{t.title}</TabTitle>
                <MdClose size={15} style={{ marginLeft: "auto" }} />
              </ActiveTab>
            ) : (
              <Tab key={i} $w={i < 8 ? 73 : 72} $line={i !== 1}>
                <Favicon>{t.icon}</Favicon>
                <TabTitle>{t.title}</TabTitle>
              </Tab>
            )
          )}
          <NewTab><MdAdd size={17} /></NewTab>
          <TabMenu><MdExpandMore size={17} /></TabMenu>
        </TabStrip>

        <TabShoulder>
          <Toolbar>
            <Slot><MdArrowBack size={18} /></Slot>
            <Slot $dim><MdArrowForward size={18} /></Slot>
            <Slot><MdRefresh size={20} /></Slot>
            <AddressBar>
              <SiteInfo><MdInfoOutline size={17} /></SiteInfo>
              <Url>127.0.0.1:8000/admin/expenses</Url>
              <MdStarOutline size={19} />
            </AddressBar>
            <Slot>
              <CopyExt>
                <svg width="18" height="8" viewBox="0 0 18 8" fill="none" stroke="#444" strokeWidth="1"><path d="M8.500 7V.5h8V7M8 4.500H1.500V8M10 3.500h4" /><path d="M11 5.500h3" stroke="#4a8ae0" /></svg>
                <CopyBadge>COPY</CopyBadge>
              </CopyExt>
            </Slot>
            {extensions.map((e, i) => <Slot key={i}>{e}</Slot>)}
            <Slot $w={38}><MdOutlineExtension size={20} /></Slot>
            <Divider />
            <Slot><MdOutlineFileDownload size={23} /></Slot>
            <Slot>
              <svg width="14" height="14" viewBox="0 0 14 14" fill="none"><path d="M5 6q1-5 4.500-4.500Q11 3.500 7.500 6 4 8 3 6.500 5 4 8 4.500T10 8" stroke="#b8459c" strokeWidth="1.100" /><path d="M1 10h12M1 12.500h12" stroke="#5c4c94" strokeWidth="1.300" strokeDasharray="2 .6" /></svg>
            </Slot>
            <Slot><MdMoreVert size={20} /></Slot>
          </Toolbar>
        </TabShoulder>

        <Page>
          <Sidebar>
            <Brand>Laravel</Brand>
            <UserName>-</UserName>
            <NavList>
              {nav.map((n) => (
                <NavItem key={n.label}>
                  <NavIcon>{n.icon}</NavIcon>
                  <NavLabel>{n.label}</NavLabel>
                  {n.caret && <Caret>{n.caret === "left" ? <FaAngleLeft size={20} /> : <FaAngleDown size={20} />}</Caret>}
                </NavItem>
              ))}
            </NavList>
          </Sidebar>
          <Main>
            <TopNav><FaBars size={13} /><FaRegBell size={14} /></TopNav>
            <Content>
              <StatCard>
                <div>
                  <StatLabel>EXPENSE TOTAL</StatLabel>
                  <StatValue>4538.00<StatDelta>+55%</StatDelta></StatValue>
                </div>
                <StatIcon>
                  <svg width="18" height="20" viewBox="0 0 18 20">
                    <path d="M7 11.500H.8V1.200h14V6" fill="none" stroke="#fff" strokeWidth="1.300" /><path d="M6 6.500q1-2 3-1.500L7.500 7z" fill="#fff" />
                    <ellipse cx="13" cy="8.800" rx="5" ry="2.300" fill="#fff" /><path d="M8 11q5 3 10 0v2q-5 3-10 0zM8 15q5 3 10 0v2q-5 4-10 0z" fill="#fff" />
                  </svg>
                </StatIcon>
              </StatCard>
              <ChartCard>
                <ChartTitle>EXPENSES CHART</ChartTitle>
                <ChartNote><FaArrowUp size={13} /><b>4% more</b>{" in 2021"}</ChartNote>
                <ExpensesPlot />
              </ChartCard>
            </Content>
          </Main>
        </Page>
        <Pointer width="13" height="19" viewBox="0 0 13 19"><path d="M1.500 1.500v13.500l3.200-3 2.200 5 2.500-1.100-2.200-4.900h4.300z" fill="#000" stroke="#fff" strokeWidth="1" /></Pointer>
      </Window>

      <Dock>
        {mainApps.map((a, i) => <DockSlot key={i} $running={i === 0}>{a}</DockSlot>)}
        <DockLine />
        {runningApps.map((a, i) => <DockSlot key={i} $running>{a}</DockSlot>)}
        <DockLine />
        {trayApps.map((a, i) => <DockSlot key={i}>{a}</DockSlot>)}
      </Dock>
    </Desktop>
  );
}
